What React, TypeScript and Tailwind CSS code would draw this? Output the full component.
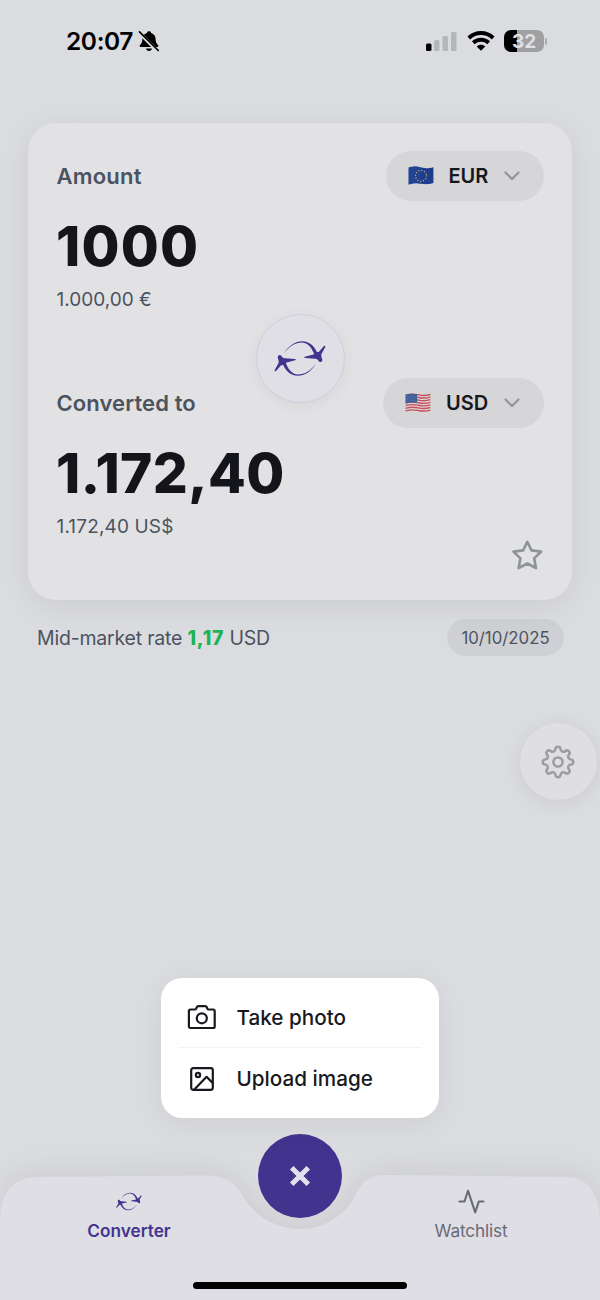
import React, { ReactNode } from 'react';

type IconProps = { className?: string };

const PLANE_PATH =
  'M131 158 C146 135 166 121.500 187 121.500 C210 122 222 136 231 154 C234 154.500 236 154 238 152.500 L252.500 136.500 C255 134.500 258 137 256.500 139.500 L244.500 161 C244 166 245.500 170 247.500 177 C248 185 240 187 236.500 182.500 C235 178 231 175.500 226 175 L195 172.500 C192 172 192 169.500 195 168.500 L223 161.500 C217 145 207 127 186 125.500 C166 125.500 148 137 131 158 Z';

const PlanesIcon = ({ className }: IconProps) => (
  <svg viewBox="102 118 156 112" className={className} fill="currentColor">
    <path d={PLANE_PATH} />
    <path d={PLANE_PATH} transform="rotate(180 180 174)" />
  </svg>
);

const BellOffIcon = () => (
  <svg width="22" height="24" viewBox="0 0 22 24" fill="none">
    <path
      d="M11 2.200c-1.200 0-2 .7-2.100 1.700C5.900 4.800 4.500 7.200 4.400 10c-.1 3-.9 4.600-2.400 6.100-.8.9-.4 1.900.8 1.900h16.400c1.200 0 1.600-1 .8-1.900-1.500-1.500-2.300-3.100-2.400-6.100-.1-2.800-1.500-5.200-4.500-6.100-.1-1-.9-1.700-2.100-1.700z"
      fill="#000"
    />
    <path d="M8 19.500h6c-.2 1.600-1.400 2.500-3 2.500s-2.800-.9-3-2.500z" fill="#000" />
    <path d="M1.500 4 19 21.500" stroke="#dbdce0" strokeWidth="3.400" />
    <path d="M1.500 2.800 20.300 21.500" stroke="#000" strokeWidth="1.700" strokeLinecap="round" />
  </svg>
);

const SignalIcon = () => (
  <svg width="32" height="20" viewBox="0 0 32 20">
    <rect x="0" y="12.500" width="5.500" height="7.500" rx="1.500" fill="#000" />
    <rect x="8" y="9" width="5.500" height="11" rx="1.500" fill="#b5b6b9" />
    <rect x="16.500" y="5" width="5.500" height="15" rx="1.500" fill="#b5b6b9" />
    <rect x="25" y="1" width="5.500" height="19" rx="1.500" fill="#b5b6b9" />
  </svg>
);

const WifiIcon = () => (
  <svg width="28" height="20" viewBox="0 0 28 20" fill="none" stroke="#000" strokeWidth="3.900">
    <path d="M1.800 7C8.600.4 19.400.4 26.200 7" />
    <path d="M6.300 11.700c4.300-4 11.100-4 15.400 0" />
    <path d="M14 19.700 9.700 15.500c2.400-2.200 6.200-2.200 8.600 0z" fill="#000" stroke="none" />
  </svg>
);

const BatteryIcon = () => (
  <div className="flex items-center">
    <div className="flex h-[22px] w-10 items-center justify-center rounded-[7px] bg-[linear-gradient(to_right,#000_33%,#9fa0a2_33%)] text-[19px] leading-none font-bold text-[#e0e1e4]">
      32
    </div>
    <div className="ml-px h-[7px] w-[2px] rounded-r-full bg-[#a8a9ab]" />
  </div>
);

const EuFlag = () => (
  <svg width="26" height="20" viewBox="0 0 26 20">
    <path d="M.6 1.600C7-.3 10 .9 13.500 1.600s7 1 11.900-.4V17c-5 1.600-8.500 1.300-12 .7S7 16.600.6 18.600z" fill="#1d3c8c" />
    <path d="M.6 1.600C7-.3 10 .9 13.500 1.600v16.100C10 17 7 16.600.6 18.600z" fill="#2a4a9a" opacity=".45" />
    <circle cx="13" cy="9.800" r="5.500" fill="none" stroke="#c3b56c" strokeWidth="1.300" strokeLinecap="round" strokeDasharray="0.100 2.780" />
  </svg>
);

const UsFlag = () => (
  <svg width="26" height="20" viewBox="0 0 26 20">
    <path d="M.6 1.600C7-.3 10 .9 13.500 1.600s7 1 11.900-.4V17c-5 1.600-8.500 1.300-12 .7S7 16.600.6 18.600z" fill="#ddd6d9" />
    <g fill="none" stroke="#c4505b" strokeWidth="1.400">
      {[1.9, 4.5, 7.1, 9.7, 12.3, 14.9, 17.5].map((y) => (
        <path key={y} d={`M.6 ${y + 0.4}C7 ${y - 1.5} 10 ${y - 0.7} 13.5 ${y}s7 1 11.9-.4`} />
      ))}
    </g>
    <path d="M.6 1.600C5.500.2 8.500.5 12 1.300v8.800C8.500 9.400 5.500 9.300.6 10.600z" fill="#3f5f98" />
    <path d="M2 4c3-1 6-1 9-.2M2 6.200c3-1 6-1 9-.2M2 8.400c3-1 6-1 9-.2" fill="none" stroke="#7f92ba" strokeWidth=".7" strokeDasharray=".7 1.300" />
  </svg>
);

const ChevronIcon = () => (
  <svg width="18" height="12" viewBox="0 0 18 12" fill="none" stroke="#92949c" strokeWidth="2.200" strokeLinecap="round" strokeLinejoin="round">
    <path d="m2.500 2.500 6.500 6.500 6.500-6.500" />
  </svg>
);

const StarIcon = () => (
  <svg width="32" height="32" viewBox="0 0 32 32" fill="none" stroke="#8d929b" strokeWidth="2.600" strokeLinejoin="round">
    <path d="m15.300 1.800 4.200 8.600 9.600 1.200-6.900 6.800 1.800 9.800-8.700-4.700-8.700 4.700 1.800-9.800-6.900-6.800 9.600-1.200z" />
  </svg>
);

/** Outline of an eight-toothed cog, alternating tooth and valley arcs */
const cogPath = () => {
  const points = Array.from({ length: 16 }, (_, i) => {
    const angle = ((i * 22.5 - 101.25) * Math.PI) / 180;
    return `${(18 + 13.2 * Math.cos(angle)).toFixed(2)} ${(18 + 13.2 * Math.sin(angle)).toFixed(2)}`;
  });
  return `M${points[0]}${points
    .map((_, i) => (i % 2 === 0 ? `A2.6 2.6 0 0 1 ${points[i + 1]}` : `A2.8 2.8 0 0 0 ${points[(i + 1) % 16]}`))
    .join('')}Z`;
};

const SettingsIcon = () => (
  <svg width="36" height="36" viewBox="0 0 36 36" fill="none" stroke="#9b9da3" strokeWidth="2.500" strokeLinejoin="round">
    <path d={cogPath()} />
    <circle cx="18" cy="18" r="4.600" />
  </svg>
);

const CameraIcon = () => (
  <svg width="30" height="26" viewBox="0 0 30 26" fill="none" stroke="#17191e" strokeWidth="2.200" strokeLinejoin="round">
    <path d="M3.500 5.500H8c.7 0 1-.4 1.300-1l.6-1.500c.3-.6.8-.9 1.500-.9h6.800c.7 0 1.200.3 1.500.9l.6 1.500c.3.600.6 1 1.300 1h4.500c1 0 1.600.6 1.600 1.600v15.300c0 1-.6 1.600-1.600 1.600H3.500c-1 0-1.600-.6-1.600-1.600V7.100c0-1 .6-1.600 1.600-1.600z" />
    <circle cx="14.800" cy="14.300" r="5" />
  </svg>
);

const ImageIcon = () => (
  <svg width="26" height="26" viewBox="0 0 26 26" fill="none" stroke="#17191e" strokeWidth="2.200" strokeLinejoin="round">
    <rect x="2.200" y="2.200" width="21.600" height="21.600" rx="2" />
    <circle cx="9" cy="9" r="2.100" />
    <path d="m5.300 23.500 12.300-12.700 6 6.200" />
  </svg>
);

const ActivityIcon = () => (
  <svg width="27" height="26" viewBox="0 0 27 26" fill="none" stroke="#686b78" strokeWidth="2.100" strokeLinecap="round" strokeLinejoin="round">
    <path d="M1.500 13.500h5l3.500-10.800 7.200 21.600L20.800 13.500h4.700" />
  </svg>
);

interface CurrencyButtonProps {
  code: string;
  flag: ReactNode;
  className: string;
}

const CurrencyButton = ({ code, flag, className }: CurrencyButtonProps) => (
  <button className={`flex h-[50px] items-center rounded-full bg-[#d6d6d8] pr-[23px] ${className}`}>
    {flag}
    <span className="ml-[15px] flex-1 text-left text-[20px] font-semibold text-[#15171c]">{code}</span>
    <ChevronIcon />
  </button>
);

const StatusBar = () => (
  <header className="flex h-[82px] items-center justify-between pr-[53px] pl-[66px]">
    <div className="flex items-center gap-[5px]">
      <span className="pt-px text-[24.5px] font-semibold tracking-[-0.4px] text-black">20:07</span>
      <BellOffIcon />
    </div>
    <div className="flex items-center gap-[9px]">
      <SignalIcon />
      <WifiIcon />
      <BatteryIcon />
    </div>
  </header>
);

const ConverterCard = () => (
  <section className="relative mx-7 mt-[41px] flex h-[477px] flex-col rounded-[28px] bg-[#e2e2e4] p-7 shadow-[0_6px_30px_rgba(0,0,0,0.07)]">
    <div className="flex items-center justify-between">
      <h2 className="pl-[0.5px] text-[22px] font-semibold tracking-[0.2px] text-[#4b535f]">Amount</h2>
      <CurrencyButton code="EUR" flag={<EuFlag />} className="w-[158px] pl-[21.5px]" />
    </div>
    <p className="mt-[15px] h-[60px] text-[55px] leading-[60px] font-extrabold tracking-[1.2px] text-[#13151a]">1000</p>
    <p className="mt-[10px] h-7 pl-[0.5px] text-[19px] leading-7 text-[#4b535f]">1.000,00 €</p>

    <div className="mt-[64px] flex items-center justify-between">
      <h2 className="pl-[0.5px] text-[22px] font-semibold tracking-[0.1px] text-[#4b535f]">Converted to</h2>
      <CurrencyButton code="USD" flag={<UsFlag />} className="w-[161px] pl-[22px]" />
    </div>
    <p className="mt-[15px] h-[60px] text-[55px] leading-[60px] font-extrabold tracking-[0.4px] text-[#13151a]">1.172,40</p>
    <p className="mt-[10px] h-7 pl-[0.5px] text-[19px] leading-7 tracking-[0.15px] text-[#4b535f]">1.172,40 US$</p>
    <div className="-mt-px flex justify-end">
      <StarIcon />
    </div>

    <button className="absolute top-[191px] left-[227.5px] flex size-[89px] items-center justify-center rounded-full border-[1.5px] border-[#cfcfdb] bg-[#e0dfe5] text-[#42338f] shadow-[0_3px_16px_rgba(0,0,0,0.05)]">
      <PlanesIcon className="h-[37px] w-[52px]" />
    </button>
  </section>
);

const ActionMenu = () => (
  <div className="absolute top-[978px] left-[161px] flex h-[140px] w-[278px] flex-col rounded-[21px] bg-white px-[17px] pt-[9px] text-[20.7px] font-medium text-[#17191e] shadow-[0_6px_30px_rgba(0,0,0,0.06)]">
    <button className="flex h-[61px] items-center border-b border-[#f3f3f4] pl-2">
      <span className="flex w-[31px] justify-center">
        <CameraIcon />
      </span>
      <span className="ml-[19.5px] pt-px">Take photo</span>
    </button>
    <button className="flex h-[61px] items-center pl-2">
      <span className="flex w-[31px] justify-center">
        <ImageIcon />
      </span>
      <span className="ml-[19.5px] pt-px">Upload image</span>
    </button>
  </div>
);

const TabBar = () => (
  <nav className="relative mt-auto h-[125px]">
    <svg
      width="600"
      height="125"
      viewBox="0 0 600 125"
      className="absolute inset-0 overflow-visible drop-shadow-[0_-4px_14px_rgba(0,0,0,0.07)]"
    >
      <path
        d="M0 125V47C1 18 12 2 38 2L205 .5C226 .5 235 8 243 21C254 40 275 54 300 54C325 54 346 39 355 21C361 7 370 0 386 0L565 2C588 2 599 18 600 47V125Z"
        fill="#dfdee4"
      />
    </svg>
    <div className="relative flex justify-between px-[59px] pt-[13px] text-[17.2px] leading-[27px]">
      <button className="flex w-[140px] flex-col items-center text-[#42338f]">
        <span className="flex h-[26px] items-center">
          <PlanesIcon className="h-[19px] w-[26px]" />
        </span>
        <span className="mt-[3px] font-semibold">Converter</span>
      </button>
      <button className="flex w-[140px] flex-col items-center text-[#686b78]">
        <ActivityIcon />
        <span className="mt-[3px] tracking-[-0.15px]">Watchlist</span>
      </button>
    </div>
    <button className="absolute -top-[41.5px] left-[258px] flex size-[84px] items-center justify-center rounded-full bg-[#42338f]">
      <svg width="22" height="22" viewBox="0 0 22 22" stroke="#e3e0ec" strokeWidth="5" className="-ml-px">
        <path d="m2.700 2.700 16.600 16.600m0-16.600L2.700 19.300" />
      </svg>
    </button>
    <div className="absolute bottom-[11.500px] left-[193px] h-[7px] w-[214px] rounded-full bg-black" />
  </nav>
);

export default function App() {
  return (
    <div className="relative flex h-[1300px] w-[600px] flex-col overflow-hidden bg-[#dbdce0] font-['Inter','Liberation_Sans',sans-serif]">
      <StatusBar />
      <ConverterCard />
      <div className="mt-[19px] flex h-[37px] items-center justify-between pr-9 pl-[37px] text-[#4b535f]">
        <p className="pt-[2px] text-[19.5px] tracking-[-0.2px]">
          Mid-market rate <span className="font-extrabold tracking-[0.7px] text-[#20b354]">1,17</span> USD
        </p>
        <span className="flex h-[37px] w-[117px] items-center justify-center rounded-full bg-[#cfd0d4] pt-[2px] text-[16.8px]">
          10/10/2025
        </span>
      </div>
      <button className="mt-[67px] mr-[3px] flex h-[77px] w-[77px] items-center justify-center self-end rounded-full bg-[#dfdfe1] pr-0.5 shadow-[0_3px_20px_rgba(0,0,0,0.07)]">
        <SettingsIcon />
      </button>
      <TabBar />
      <ActionMenu />
    </div>
  );
}
